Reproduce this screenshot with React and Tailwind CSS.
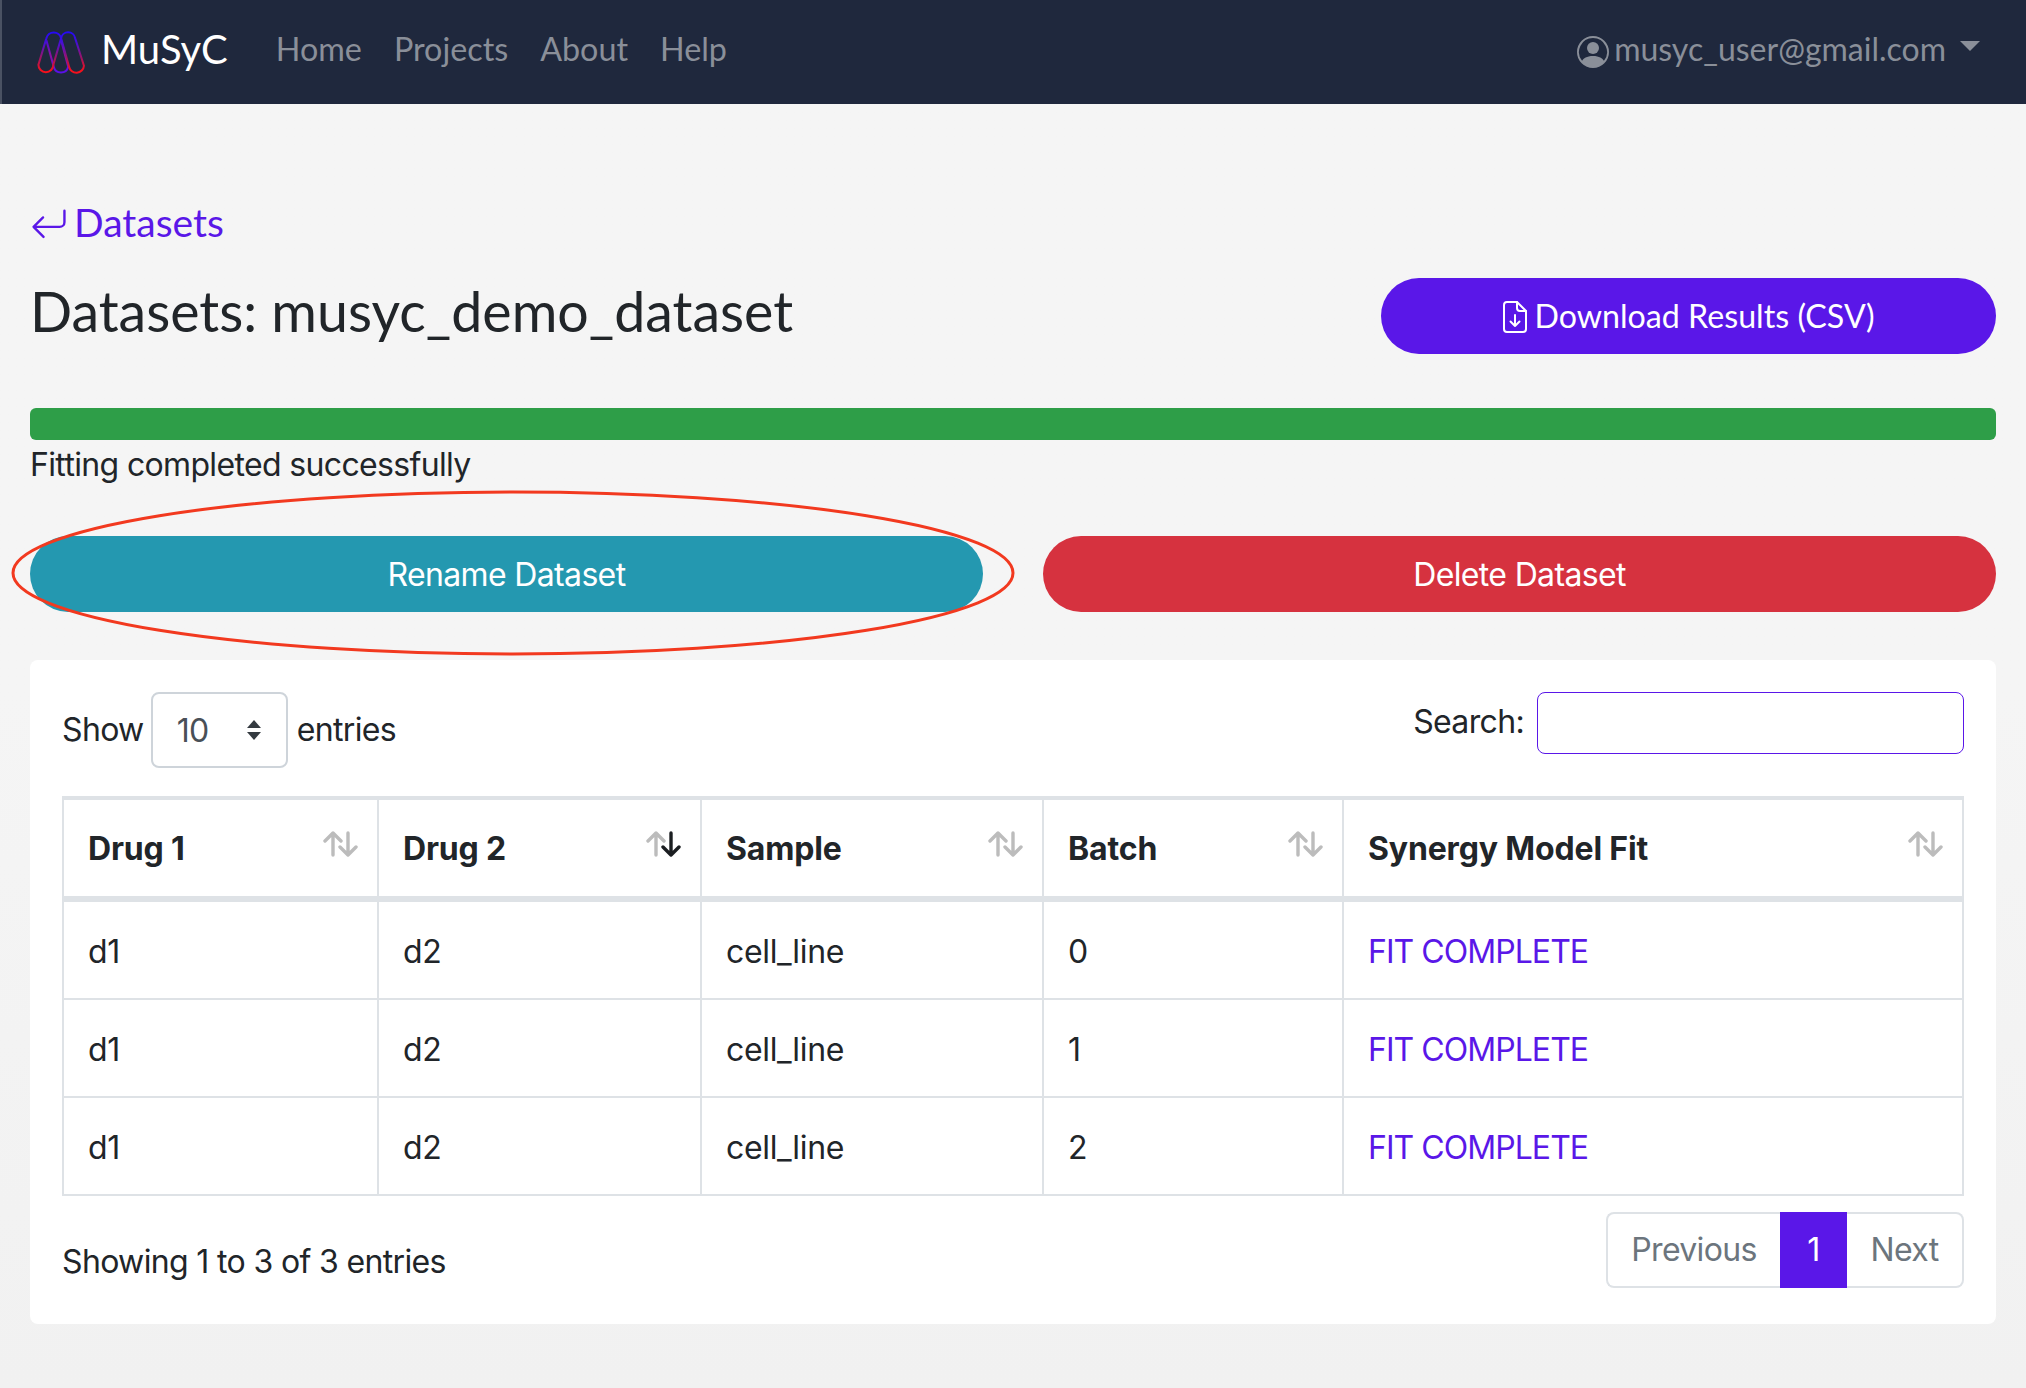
import React from "react";

function Logo() {
  return (
    <svg width="49" height="49" viewBox="0 0 48 48" fill="none" className="shrink-0">
      <defs>
        <linearGradient id="lg" gradientUnits="userSpaceOnUse" x1="0" y1="2" x2="0" y2="47">
          <stop offset="0" stopColor="#1d08ff" />
          <stop offset="0.3" stopColor="#4a10d0" />
          <stop offset="0.62" stopColor="#a01460" />
          <stop offset="0.88" stopColor="#f5101c" />
        </linearGradient>
        <linearGradient id="lc" gradientUnits="userSpaceOnUse" x1="0" y1="2" x2="0" y2="47">
          <stop offset="0" stopColor="#1d08ff" />
          <stop offset="0.55" stopColor="#8a12a0" />
          <stop offset="0.9" stopColor="#5a10e8" />
        </linearGradient>
      </defs>
      <path d="M9.200 12 L16.400 38 A7.300 7.300 0 0 0 30.600 38 L23.600 12" stroke="url(#lc)" strokeWidth="2" />
      <path d="M1.400 36 L9.200 10 A7.400 7.400 0 0 1 23.600 10 L16 36 A7.300 7.300 0 0 1 1.400 36 Z" stroke="url(#lg)" strokeWidth="2" />
      <path d="M23.600 10 A7 7 0 0 1 37.400 10 L46 37 A7.400 7.400 0 0 1 31.400 38 Z" stroke="url(#lg)" strokeWidth="2" />
    </svg>
  );
}

function SortIcon({ active }) {
  return (
    <svg width="36" height="26" viewBox="0 0 36 26" fill="none" strokeWidth="3.4" strokeLinecap="round" strokeLinejoin="round" className="absolute right-[18px] top-[31px]">
      <path d="M10 24V2M2 10l8-8 8 8" stroke="#bcbcbc" />
      <path d="M25 2v22M17 16l8 8 8-8" stroke={active ? "#1b1e21" : "#bcbcbc"} />
    </svg>
  );
}

const th = "relative border-x-2 border-t-4 border-b-[6px] border-x-[#dee2e6] border-t-[#dee2e6] border-b-[#dee2e6] px-6 pt-[25px] pb-[23px] text-left text-[32px] leading-[48px] font-bold tracking-[-0.15px] text-[#212529]";
const td = "border-2 border-[#dee2e6] px-6 pt-[26px] pb-[22px] text-[32px] leading-[48px]";
const rows = [0, 1, 2];
const lato = "font-['Lato','Inter',sans-serif] tracking-normal";

export default function App() {
  return (
    <div className="relative min-h-[1388px] bg-linear-to-b from-[#f5f5f5] from-50% to-[#f1f1f1] font-['Inter',sans-serif] tracking-[-0.65px] text-[#212529]">
      <nav className={`flex h-[104px] items-center justify-between border-l-2 border-l-[#4a5263] bg-[#1f283d] pl-[35px] pr-[46px] ${lato}`}>
        <div className="mb-[7px] flex items-center">
          <span className="mt-[7px]"><Logo /></span>
          <span className="ml-[15px] text-[40px] leading-[60px] text-white">MuSyC</span>
          <div className="ml-[48px] flex gap-[32px] text-[32.3px] leading-[48px] text-[#8a8f99]">
            <span>Home</span>
            <span>Projects</span>
            <span>About</span>
            <span>Help</span>
          </div>
        </div>
        <div className="flex items-center text-[32px] leading-[48px] text-[#8a8f99]">
          <svg width="32" height="32" viewBox="0 0 16 16" fill="currentColor">
            <path d="M11 6a3 3 0 1 1-6 0 3 3 0 0 1 6 0z" />
            <path fillRule="evenodd" d="M0 8a8 8 0 1 1 16 0A8 8 0 0 1 0 8zm8-7a7 7 0 0 0-5.468 11.370C3.242 11.226 4.805 10 8 10s4.757 1.225 5.468 2.370A7 7 0 0 0 8 1z" />
          </svg>
          <span className="mb-[7px] ml-[5px]">musyc_user@gmail.com</span>
          <span className="mb-[12px] ml-[14px] h-0 w-0 border-x-[10px] border-t-[10px] border-x-transparent border-t-[#8a8f99]" />
        </div>
      </nav>

      <main className="px-[30px] pt-[96px]">
        <div className={`flex items-center text-[39px] leading-[44px] text-[#5a17e8] ${lato}`}>
          <svg width="38" height="38" viewBox="0 0 16 16" fill="currentColor" className="mt-[6px] mr-[6px]">
            <path fillRule="evenodd" d="M14.500 1.500a.5.5 0 0 1 .5.5v4.800a2.500 2.500 0 0 1-2.500 2.500H2.707l3.347 3.346a.5.5 0 0 1-.708.708l-4.200-4.200a.5.5 0 0 1 0-.708l4-4a.5.5 0 1 1 .708.708L2.707 8.300H12.500A1.500 1.500 0 0 0 14 6.800V2a.5.5 0 0 1 .5-.5z" />
          </svg>
          <span>Datasets</span>
        </div>

        <div className="mt-[34px] flex items-center justify-between">
          <h1 className={`mb-[10px] text-[55.5px] leading-[62px] font-normal text-[#212529] ${lato}`}>Datasets: musyc_demo_dataset</h1>
          <button className={`flex h-[76px] w-[615px] items-center justify-center rounded-[38px] bg-[#5a17e8] text-[32.2px] text-white ${lato}`}>
            <svg width="24" height="32" viewBox="0 0 24 32" fill="none" stroke="white" strokeWidth="2" strokeLinecap="round" strokeLinejoin="round" className="mr-[8px] mt-[2px]">
              <path d="M4 1h10l9 9v18a3 3 0 0 1-3 3H4a3 3 0 0 1-3-3V4a3 3 0 0 1 3-3z" />
              <path d="M14 1v6a3 3 0 0 0 3 3h6" />
              <path d="M12 14v11M7.500 20.500 12 25l4.500-4.500" />
            </svg>
            Download Results (CSV)
          </button>
        </div>

        <div className="mt-[54px] h-[32px] rounded-[6px] bg-[#2e9e48]" />
        <p className="mt-[1px] text-[32px] leading-[48px]">Fitting completed successfully</p>

        <div className="mt-[47px] flex gap-[60px]">
          <button className="h-[76px] flex-1 rounded-[38px] bg-[#2498b0] pt-[2px] text-[32px] text-white">Rename Dataset</button>
          <button className="h-[76px] flex-1 rounded-[38px] bg-[#d6323f] pt-[2px] text-[32px] text-white">Delete Dataset</button>
        </div>

        <section className="mt-[48px] rounded-[8px] bg-white p-[32px] pb-[36px]">
          <div className="flex items-start justify-between">
            <div className="flex items-center text-[32px] leading-[48px]">
              <span>Show</span>
              <div className="mr-[9px] ml-[7px] flex h-[76px] w-[137px] items-center justify-between rounded-[8px] border-2 border-[#ced4da] pl-[24px] pr-[24px] text-[#495057]">
                <span className="mt-[2px]">10</span>
                <svg width="16" height="22" viewBox="0 0 16 22" fill="#343a40">
                  <path d="M8 1 15 9H1zM8 21 1 13h14z" />
                </svg>
              </div>
              <span>entries</span>
            </div>
            <div className="flex items-center text-[32px] leading-[48px]">
              <span className="mb-[3px]">Search:</span>
              <div className="ml-[13px] h-[62px] w-[427px] rounded-[8px] border-[1.5px] border-[#5a17e8] bg-white" />
            </div>
          </div>

          <table className="mt-[28px] w-full table-fixed border-collapse">
            <colgroup>
              <col className="w-[315px]" />
              <col className="w-[323px]" />
              <col className="w-[342px]" />
              <col className="w-[300px]" />
              <col />
            </colgroup>
            <thead>
              <tr>
                <th className={th}>Drug 1<SortIcon /></th>
                <th className={th}>Drug 2<SortIcon active /></th>
                <th className={th}>Sample<SortIcon /></th>
                <th className={th}>Batch<SortIcon /></th>
                <th className={th}>Synergy Model Fit<SortIcon /></th>
              </tr>
            </thead>
            <tbody className="tracking-[-0.35px]">
              {rows.map((i) => (
                <tr key={i}>
                  <td className={`${td} text-[#212529]`}>d1</td>
                  <td className={`${td} text-[#212529]`}>d2</td>
                  <td className={`${td} text-[#212529]`}>cell_line</td>
                  <td className={`${td} text-[#212529]`}>{i}</td>
                  <td className={`${td} tracking-[-0.95px] text-[#5a17e8]`}>FIT COMPLETE</td>
                </tr>
              ))}
            </tbody>
          </table>

          <div className="mt-[16px] flex items-start justify-between">
            <span className="mt-[26px] text-[32px] leading-[48px]">Showing 1 to 3 of 3 entries</span>
            <div className="flex h-[76px] text-[32px] leading-[48px] text-[#6c757d]">
              <span className="flex w-[174px] items-center justify-center rounded-l-[8px] border-2 border-r-0 border-[#dee2e6]">Previous</span>
              <span className="flex w-[67px] items-center justify-center bg-[#5a17e8] text-white">1</span>
              <span className="flex w-[117px] items-center justify-center rounded-r-[8px] border-2 border-l-0 border-[#dee2e6]">Next</span>
            </div>
          </div>
        </section>
      </main>

      <svg width="1006" height="168" viewBox="0 0 1006 168" fill="none" className="absolute left-[10px] top-[489px]">
        <ellipse cx="503" cy="84" rx="500" ry="81" stroke="#f2391f" strokeWidth="3" />
      </svg>
    </div>
  );
}
